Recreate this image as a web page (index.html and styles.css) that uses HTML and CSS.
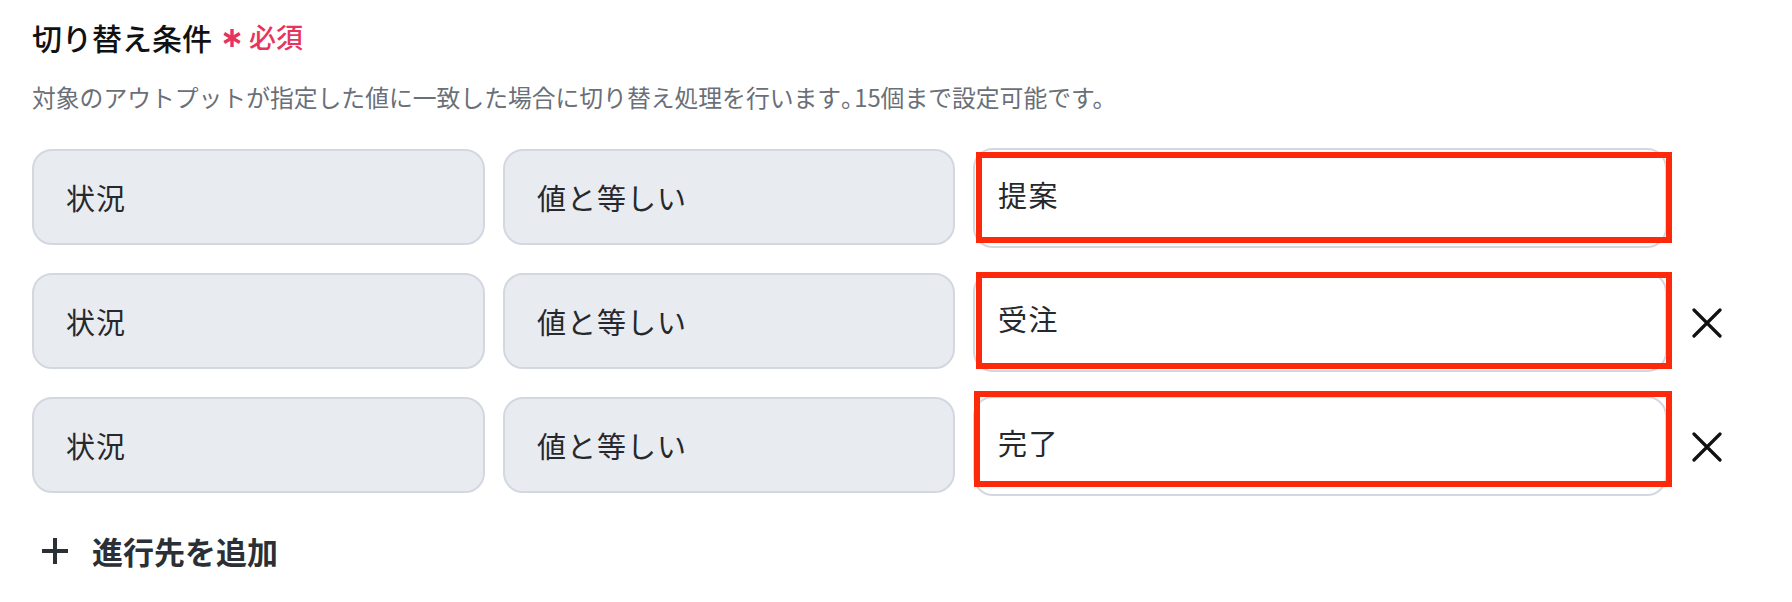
FILE: index.html
```html
<!DOCTYPE html>
<html lang="ja">
<head>
<meta charset="utf-8">
<title>切り替え条件</title>
<link rel="stylesheet" href="styles.css">
</head>
<body>
<div class="page">
  <div class="title">
    <span class="title-text">切り替え条件</span>
    <svg class="req-star" viewBox="0 0 20 20" width="20" height="20" aria-hidden="true">
      <g stroke="currentColor" stroke-width="3.4" stroke-linecap="butt">
        <line x1="10" y1="1" x2="10" y2="19"/>
        <line x1="2.2" y1="5.5" x2="17.8" y2="14.5"/>
        <line x1="2.2" y1="14.5" x2="17.8" y2="5.5"/>
      </g>
    </svg>
    <span class="req-text">必須</span>
  </div>
  <p class="desc">対象のアウトプットが指定した値に一致した場合に切り替え処理を行います<span class="punct">。</span>15個まで設定可能です。</p>

  <div class="rows">
    <div class="row">
      <div class="select">状況</div>
      <div class="select">値と等しい</div>
      <div class="field-wrap">
        <div class="field">提案</div>
        <div class="mark mark-1"></div>
      </div>
      <div class="remove"></div>
    </div>
    <div class="row">
      <div class="select">状況</div>
      <div class="select">値と等しい</div>
      <div class="field-wrap">
        <div class="field">受注</div>
        <div class="mark mark-2"></div>
      </div>
      <div class="remove">
        <svg viewBox="0 0 30 30" width="30" height="30" aria-hidden="true">
          <path d="M2 2 L28 28 M28 2 L2 28" stroke="#111" stroke-width="3.2" stroke-linecap="round" fill="none"/>
        </svg>
      </div>
    </div>
    <div class="row">
      <div class="select">状況</div>
      <div class="select">値と等しい</div>
      <div class="field-wrap">
        <div class="field">完了</div>
        <div class="mark mark-3"></div>
      </div>
      <div class="remove">
        <svg viewBox="0 0 30 30" width="30" height="30" aria-hidden="true">
          <path d="M2 2 L28 28 M28 2 L2 28" stroke="#111" stroke-width="3.2" stroke-linecap="round" fill="none"/>
        </svg>
      </div>
    </div>
  </div>

  <div class="add">
    <svg class="plus" viewBox="0 0 28 28" width="28" height="28" aria-hidden="true">
      <path d="M14 1 V27 M1 14 H27" stroke="#2b2f36" stroke-width="4" fill="none"/>
    </svg>
    <span class="add-text">進行先を追加</span>
  </div>
</div>
</body>
</html>
```

FILE: styles.css
```css
* { box-sizing: border-box; }

html, body {
  margin: 0;
  padding: 0;
  background: #ffffff;
}

body {
  font-family: "Noto Sans CJK JP", "Noto Sans", sans-serif;
  color: #25282d;
}

.page {
  padding: 17px 32px 0 32px;
}

.title {
  display: flex;
  align-items: center;
  height: 40px;
  line-height: 40px;
}

.title-text {
  font-size: 30px;
  font-weight: 500;
  color: #111111;
}

.req-star {
  color: #e8345c;
  margin-left: 10px;
  margin-top: 2px;
}

.req-text {
  color: #e8345c;
  font-size: 27px;
  font-weight: 500;
  margin-left: 7px;
}

.desc {
  margin: 23px 0 0 0;
  font-size: 23.8px;
  line-height: 34px;
  color: #6a6f78;
  white-space: nowrap;
}

.punct {
  letter-spacing: -0.45em;
}

.rows {
  margin-top: 35px;
  display: flex;
  flex-direction: column;
  gap: 28px;
}

.row {
  display: grid;
  grid-template-columns: 453px 452px 694px 44px;
  column-gap: 18px;
  align-items: start;
  height: 96px;
}

.select {
  height: 96px;
  background: #e8ebf0;
  border: 2px solid #d3d8e0;
  border-radius: 20px;
  display: flex;
  align-items: center;
  padding-left: 32px;
  font-size: 29px;
  letter-spacing: 1px;
  color: #25282d;
}

.field-wrap {
  position: relative;
  margin-top: -1px;
}

.field {
  height: 100px;
  background: #ffffff;
  border: 2px solid #d3d8e0;
  border-radius: 20px;
  display: flex;
  align-items: center;
  padding-left: 23px;
  padding-bottom: 8px;
  font-size: 29px;
  letter-spacing: 1.5px;
  color: #25282d;
}

.mark {
  position: absolute;
  border: 6px solid #fc2a0a;
  pointer-events: none;
}

.mark-1 { left: 3px; top: 4px; width: 696px; height: 91px; }
.mark-2 { left: 3px; top: 0px; width: 696px; height: 97px; }
.mark-3 { left: 1px; top: -5px; width: 698px; height: 96px; }

.remove {
  height: 96px;
  display: flex;
  align-items: center;
  justify-content: center;
  padding-top: 4px;
}

.add {
  margin-top: 38px;
  display: flex;
  align-items: center;
  height: 40px;
  padding-left: 9px;
}

.plus {
  display: block;
}

.add-text {
  margin-left: 23px;
  font-size: 31px;
  font-weight: 700;
  color: #2b2f36;
  line-height: 40px;
}
```
